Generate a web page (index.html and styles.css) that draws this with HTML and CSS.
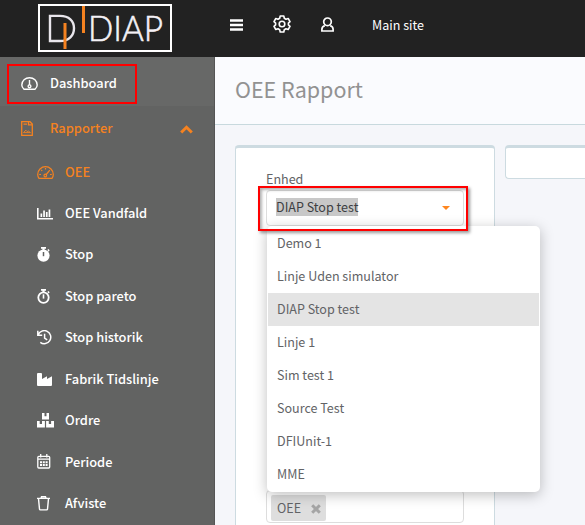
FILE: index.html
```html
<!DOCTYPE html>
<html lang="da">
<head>
<meta charset="utf-8">
<title>OEE Rapport</title>
<link rel="stylesheet" href="styles.css">
</head>
<body>
<header class="topbar">
  <div class="brand">
    <svg width="135" height="49" viewBox="0 0 135 49">
      <rect x="1" y="1" width="132" height="46" fill="none" stroke="#fff" stroke-width="2"/>
      <path d="M12 11.900H22C31 11.900 36 17 36 24.200S31 37 22 37H12Z" fill="none" stroke="#e9e6ec" stroke-width="2.400"/>
      <path d="M27 19V45M45.500 2V29" stroke="#f58220" stroke-width="3"/>
      <text class="wordmark" x="50" y="37" textLength="75" lengthAdjust="spacingAndGlyphs">DIAP</text>
    </svg>
  </div>
  <nav class="tools">
    <svg class="t-menu" width="13" height="12" viewBox="0 0 13 12"><path d="M0 1.500H13M0 6H13M0 10.500H13" stroke="#fff" stroke-width="2.400"/></svg>
    <svg class="t-gear" width="18" height="18" viewBox="0 0 18 18" fill="none" stroke="#fff" stroke-width="1.600" stroke-linejoin="round"><path d="M7.200 1H10.800L11.300 3.200L13 4.200L15.200 3.500L17 6.600L15.400 8.100V9.900L17 11.400L15.200 14.500L13 13.800L11.300 14.800L10.800 17H7.200L6.700 14.800L5 13.800L2.800 14.500L1 11.400L2.600 9.900V8.100L1 6.600L2.800 3.500L5 4.200L6.700 3.200Z"/><circle cx="9" cy="9" r="2.800"/></svg>
    <svg class="t-user" width="13" height="15" viewBox="0 0 13 15" fill="none" stroke="#fff" stroke-width="1.700"><circle cx="6.500" cy="4.800" r="3.800"/><path d="M3.800 8.600C1.700 9.300.9 10.600.9 12.200V14H12.100V12.200C12.100 10.600 11.300 9.300 9.200 8.600"/></svg>
    <span class="site">Main site</span>
  </nav>
</header>
<div class="body">
  <aside class="sidebar">
    <a class="item dash"><svg width="17" height="13" viewBox="0 0 17 13" fill="none" stroke="#fff" stroke-width="1.400"><path d="M3 12.200C1.600 11 .8 9.600.8 8A7.700 7.300 0 0 1 16.200 8C16.200 9.600 15.400 11 14 12.200Z"/><path d="M8.500 3V8"/><circle cx="8.500" cy="9.300" r="1.400"/></svg><span>Dashboard</span></a>
    <a class="item group"><svg width="12" height="15" viewBox="0 0 12 15" fill="none" stroke="#f58220" stroke-width="1.300"><path d="M.7.7H9L11.300 3V14.300H.7Z"/><path d="M2.500 3.200H6M7.500 1V3.800H11"/><path d="M2.500 11.600L4.800 9.200L6.200 10.600L7.300 10L9.500 11.600Z" stroke-width=".9"/></svg><span>Rapporter</span><svg class="chev" width="13" height="9" viewBox="0 0 13 9" fill="none" stroke="#f58220" stroke-width="3"><path d="M1.200 7.500L6.500 2.300L11.800 7.500"/></svg></a>
    <div class="subs">
      <a class="item active"><svg width="17" height="13" viewBox="0 0 17 13" fill="none" stroke="#f58220" stroke-width="1.200"><path d="M2 12.300C1.100 11.100.7 9.900.7 8.500A7.800 7.800 0 0 1 16.300 8.500C16.300 9.900 15.900 11.100 15 12.300Z"/><path d="M8.500 2V3.500M4.300 4L5.200 4.900M2.200 8.500H4M13 8.500H14.800M8.800 9L12.800 4.200"/><circle cx="8.300" cy="9.500" r="1.300"/></svg><span>OEE</span></a>
      <a class="item"><svg width="16" height="12" viewBox="0 0 16 12" fill="#fff"><path d="M0 0H1.600V10H16V11.500H0ZM3.500 5.500H5.200V9H3.500ZM6.200 2.500H7.900V9H6.200ZM8.900 4H10.600V9H8.900ZM11.600 1.500H13.300V9H11.600Z"/></svg><span>OEE Vandfald</span></a>
      <a class="item"><svg width="13" height="15" viewBox="0 0 13 15"><path d="M4 0H9V1.700H7.600V3H5.400V1.700H4ZM10.300 3L11.400 1.900L12.700 3.200L11.600 4.400Z" fill="#fff"/><circle cx="6.500" cy="8.600" r="6.100" fill="#fff"/><path d="M6.500 5V9.200" stroke="#626362" stroke-width="1.500"/></svg><span>Stop</span></a>
      <a class="item"><svg width="13" height="15" viewBox="0 0 13 15"><path d="M4 0H9V1.700H7.600V3H5.400V1.700H4ZM10.300 3L11.400 1.900L12.700 3.200L11.600 4.400Z" fill="#fff"/><circle cx="6.500" cy="8.600" r="5.200" fill="none" stroke="#fff" stroke-width="1.800"/><path d="M6.500 5.300V9.600" stroke="#fff" stroke-width="1.600"/></svg><span>Stop pareto</span></a>
      <a class="item"><svg width="15" height="15" viewBox="0 0 15 15" fill="none" stroke="#fff" stroke-width="1.500"><path d="M.8.8V5.200H5.200M1.200 4.800A6.500 6.500 0 1 1 3.300 12.300M7.600 3.800V8L10.200 9.800"/></svg><span>Stop historik</span></a>
      <a class="item"><svg width="16" height="13" viewBox="0 0 16 13" fill="#fff"><path d="M0 1Q0 0 1 0H4Q5 0 5 1V6L10 3.200V6L15 3.200V12Q15 13 14 13H1Q0 13 0 12Z"/></svg><span>Fabrik Tidslinje</span></a>
      <a class="item"><svg width="17" height="15" viewBox="0 0 17 15" fill="#fff"><path d="M5 0H7.500V3.300H9.500V0H12V6.500H5ZM0 8H2.700V11H5V8H7.900V14.500H0ZM9.100 8H11.800V11H14.100V8H17V14.500H9.100Z"/></svg><span>Ordre</span></a>
      <a class="item"><svg width="14" height="15" viewBox="0 0 14 15" fill="none" stroke="#fff" stroke-width="1.300"><rect x=".8" y="2.400" width="11.900" height="11.600" rx="1"/><path d="M1 5.200H13M3.700 0V3.500M9.800 0V3.500"/><path d="M3 8.200H10.600M3 11H10.600" stroke-width="2" stroke-dasharray="2 .8"/></svg><span class="low">Periode</span></a>
      <a class="item"><svg width="14" height="15" viewBox="0 0 14 15" fill="none" stroke="#fff" stroke-width="1.400"><path d="M0 2.400H13M4 2.200L4.500 .8H8.500L9 2.200M1.500 2.600L2.500 13.100Q2.600 13.900 3.400 13.900H9.600Q10.400 13.900 10.500 13.100L11.500 2.600"/></svg><span>Afviste</span></a>
    </div>
    <div class="mark mark-dash"></div>
  </aside>
  <main class="main">
    <div class="title"><h1>OEE Rapport</h1></div>
    <div class="panels">
      <section class="panel filter">
        <label class="label">Enhed</label>
        <div class="select"><span class="value">DIAP Stop test</span><i class="caret"></i>
          <ul class="menu">
            <li>Demo 1</li><li>Linje Uden simulator</li><li class="sel">DIAP Stop test</li><li>Linje 1</li><li>Sim test 1</li><li>Source Test</li><li>DFIUnit-1</li><li>MME</li>
          </ul>
          <div class="mark mark-select"></div>
        </div>
        <div class="tags"><span class="tag">OEE<svg width="10" height="10" viewBox="0 0 10 10"><path d="M1.200 1.200L8.800 8.800M8.800 1.200L1.200 8.800" stroke="#a5a5a5" stroke-width="3"/></svg></span></div>
      </section>
      <section class="panel empty"></section>
    </div>
  </main>
</div>
</body>
</html>
```
FILE: styles.css
```css
* { box-sizing: border-box; }
body { margin: 0; width: 585px; height: 525px; overflow: hidden; font-family: "Noto Sans CJK JP", "Open Sans", sans-serif; font-size: 12.55px; line-height: 20px; color: #626366; background: #f5f6fa; }
.topbar { display: flex; height: 57px; background: #222; }
.brand { width: 215px; padding: 4px 0 0 38px; }
.brand svg { display: block; }
.wordmark { font-family: Lato, sans-serif; font-weight: 300; font-size: 36px; fill: #f4f1f6; stroke: #f4f1f6; stroke-width: .6px; }
.tools { display: flex; align-items: center; height: 50px; padding-left: 15px; color: #fff; }
.t-gear { margin: 0 0 2px 30px; }
.t-user { margin: 0 0 1px 30px; }
.site { margin-left: 38px; }
.body { display: flex; height: 468px; }
.sidebar { position: relative; flex: none; width: 215px; height: 468px; overflow: hidden; background: #626362; border-right: 1px solid #555; color: #fff; font-size: 12.85px; font-weight: 500; }
.item { display: flex; align-items: center; height: 41.375px; }
.item svg { flex: none; }
.item span { position: absolute; left: 65px; padding-bottom: 2px; white-space: nowrap; }
.item .low { padding-bottom: 1px; }
.dash { height: 49px; padding: 4px 0 0 22px; background: #676867; }
.dash svg { margin-left: -1px; }
.dash span, .group span { left: 50px; }
.group { height: 46px; padding-left: 21px; color: #f58220; }
.group svg { margin-bottom: 2px; }
.group .chev { margin: 1px 0 0 147px; }
.subs { padding-left: 36.5px; }
.subs svg { margin-bottom: 1px; }
.active { color: #f58220; }
.mark { position: absolute; border: 2px solid #f00; }
.mark-dash { left: 7px; top: 7px; width: 130px; height: 40px; }
.main { flex: 1; min-width: 0; }
.title { height: 68px; padding: 17px 0 0 20px; background: #fafbfe; border-bottom: 1px solid #c8d9de; }
h1 { margin: 0; font-size: 21.5px; line-height: 30px; font-weight: 400; color: #929292; }
.panels { display: flex; align-items: flex-start; gap: 10px; height: 400px; padding: 20px 0 0 20px; }
.panel { background: #fff; border: 1px solid #cddbe1; border-top-width: 3px; border-radius: 4px; }
.filter { flex: none; width: 260px; height: 380px; padding: 21px 30px 0; border-bottom: 0; border-radius: 4px 4px 0 0; }
.empty { flex: 1; height: 34px; border-right: 0; border-radius: 4px 0 0 4px; }
.label { display: block; height: 21px; }
.select { position: relative; display: flex; align-items: center; justify-content: space-between; height: 36px; padding: 0 13px 0 9px; border: 1px solid #ddd; border-radius: 4px; background: #fff; }
.value { height: 18px; margin-bottom: 2px; line-height: 17px; background: #c8c8c8; color: #3d3f42; }
.caret { border: 4px solid transparent; border-top-color: #ff861e; border-bottom: 0; }
.menu { position: absolute; z-index: 1; left: 0; top: 35px; width: 273px; height: 266px; margin: 0; padding: 1px; list-style: none; background: #fff; border-radius: 5px; box-shadow: 0 3px 14px rgba(0,0,0,.25); }
.menu li { height: 33px; line-height: 31px; padding-left: 9px; }
.menu .sel { background: #e4e4e4; }
.mark-select { z-index: 2; left: -9px; top: -5px; width: 210px; height: 45px; box-shadow: 2px 2px 3px rgba(0,0,0,.4), inset 2px 2px 3px rgba(0,0,0,.3); }
.tags { height: 33px; margin-top: 264px; padding: 4px; border: 1px solid #ddd; border-radius: 4px; }
.tag { display: flex; align-items: center; width: 55px; height: 26px; padding: 0 0 1px 6px; line-height: 18px; background: #dedede; border-radius: 2px; }
.tag svg { margin: 3px 0 0 10px; }
```
